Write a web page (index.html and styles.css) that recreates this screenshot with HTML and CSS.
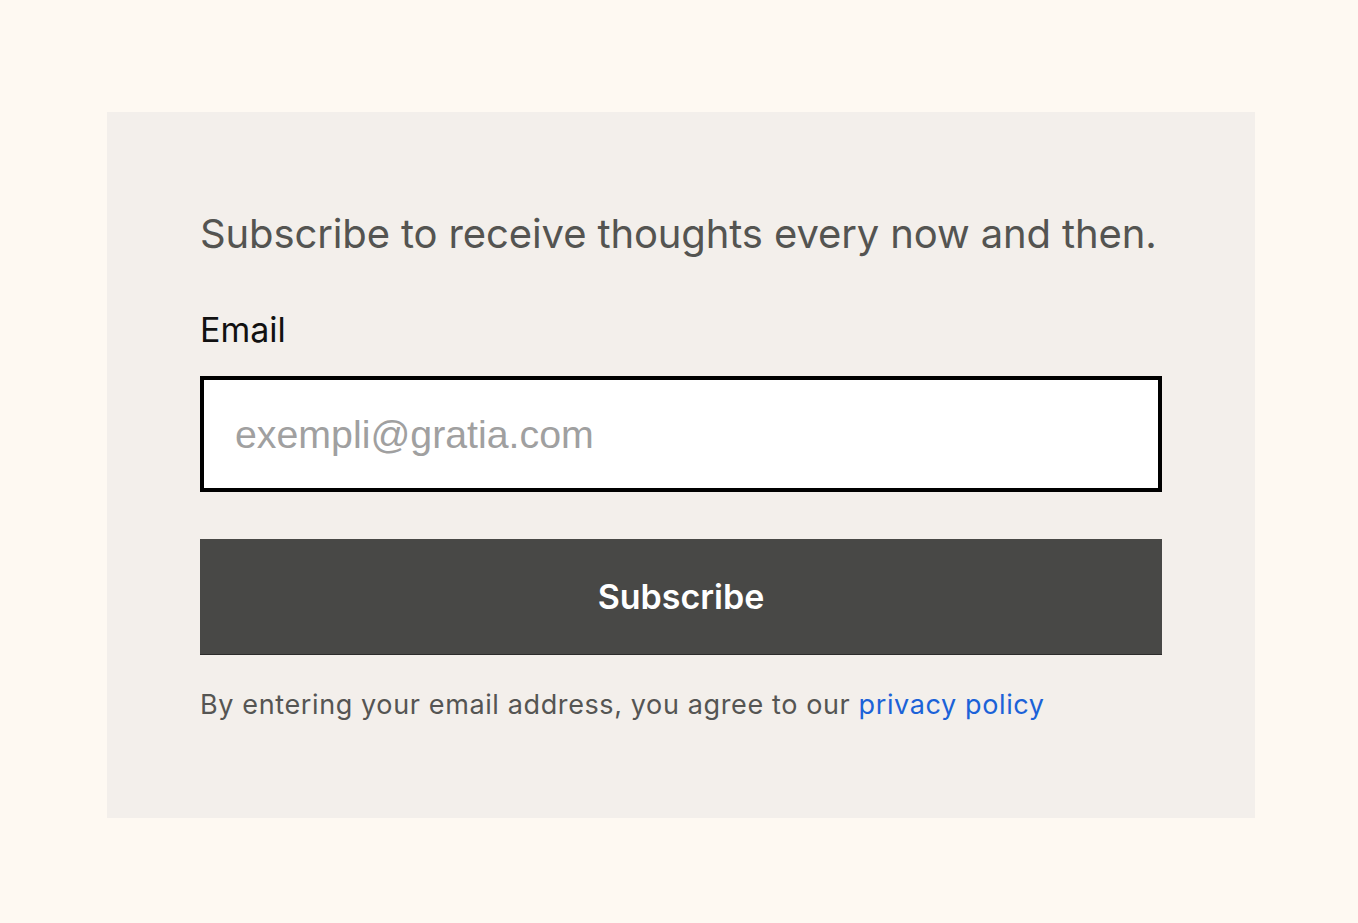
FILE: index.html
```html
<!DOCTYPE html>
<html lang="en">
<head>
<meta charset="utf-8">
<title>Subscribe</title>
<link rel="stylesheet" href="styles.css">
</head>
<body>
<main class="page">
  <section class="card">
    <h2 class="title">Subscribe to receive thoughts every now and then.</h2>
    <form class="form">
      <label class="label" for="email">Email</label>
      <input class="input" id="email" type="email" placeholder="exempli@gratia.com">
      <button class="button" type="button">Subscribe</button>
    </form>
    <p class="note">By entering your email address, you agree to our <a class="link" href="#">privacy policy</a></p>
  </section>
</main>
</body>
</html>
```
FILE: styles.css
```css
html, body {
  margin: 0;
  padding: 0;
  background: #fef9f2;
}
body {
  font-family: "Inter", "Noto Sans", sans-serif;
}
.page {
  padding: 112px 103px 105px 107px;
}
.card {
  background: #f3efeb;
  padding: 96px 93px 93px 93px;
}
.title {
  margin: 0;
  font-size: 40px;
  font-weight: 400;
  line-height: 52px;
  letter-spacing: -0.12px;
  white-space: nowrap;
  color: #545451;
}
.form {
  display: flex;
  flex-direction: column;
  margin-top: 50px;
}
.label {
  font-size: 34px;
  line-height: 40px;
  color: #111;
}
.input {
  margin-top: 26px;
  height: 116px;
  box-sizing: border-box;
  border: 4px solid #000;
  background: #fff;
  padding: 0 31px;
  font-family: "Liberation Sans", Arial, sans-serif;
  font-size: 39.3px;
  color: #222;
  outline: none;
}
.input::placeholder {
  color: #a0a0a0;
}
.button {
  margin-top: 47px;
  height: 116px;
  border: none;
  border-bottom: 1px solid #2c2c2b;
  background: #484846;
  color: #fff;
  font-family: "Inter", "Noto Sans", sans-serif;
  font-size: 34px;
  font-weight: 600;
}
.note {
  margin: 30px 0 0;
  font-size: 27px;
  line-height: 40px;
  letter-spacing: 0.62px;
  color: #555553;
}
.link {
  color: #1b62d8;
  text-decoration: none;
}
```
